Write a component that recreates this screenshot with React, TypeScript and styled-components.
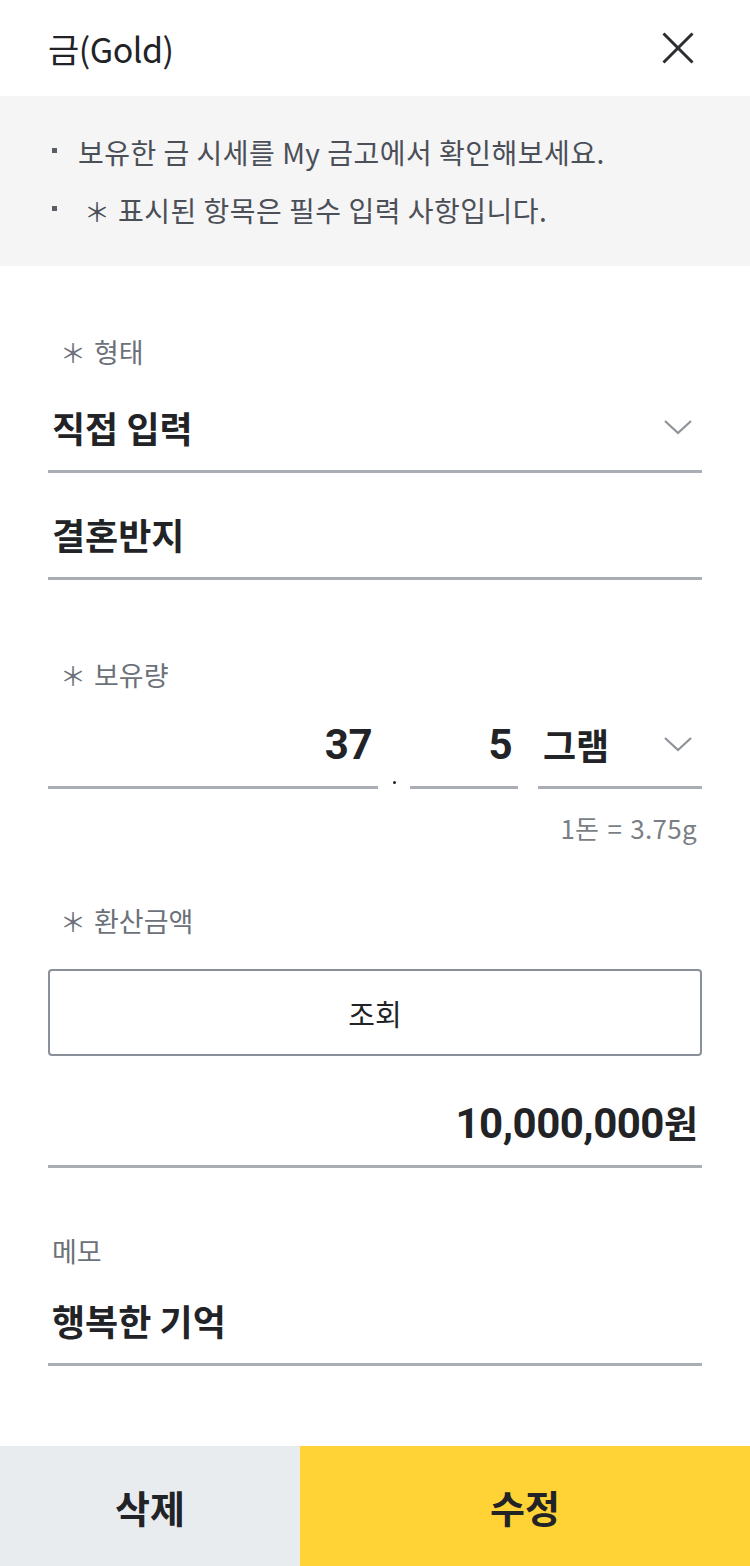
import styled, { createGlobalStyle } from 'styled-components';

const GlobalStyle = createGlobalStyle`
    * {
        box-sizing: border-box;
    }
    body {
        margin: 0;
        background: #ffffff;
        font-family: "Noto Sans CJK KR", "Noto Sans", sans-serif;
        color: #222327;
    }
`;

const Chevron = () => (
    <svg width="28" height="16" viewBox="0 0 28 16">
        <polyline points="1,2 14,14 27,2" fill="none" stroke="#8e939b" strokeWidth="2.2" />
    </svg>
);

const CloseIcon = () => (
    <svg width="32" height="32" viewBox="0 0 32 32">
        <line x1="1.5" y1="1.5" x2="30.5" y2="30.5" stroke="#2b2d31" strokeWidth="3" />
        <line x1="30.5" y1="1.5" x2="1.5" y2="30.5" stroke="#2b2d31" strokeWidth="3" />
    </svg>
);

export default function App() {
    return (
        <>
            <GlobalStyle />
            <Page>
                <Header>
                    <Title>금(Gold)</Title>
                    <CloseButton aria-label="닫기">
                        <CloseIcon />
                    </CloseButton>
                </Header>
                <Notice>
                    <NoticeItem>
                        <NoticeText>보유한 금 시세를 My 금고에서 확인해보세요.</NoticeText>
                    </NoticeItem>
                    <NoticeItem>
                        <NoticeText>
                            <Star $inline>＊</Star>표시된 항목은 필수 입력 사항입니다.
                        </NoticeText>
                    </NoticeItem>
                </Notice>

                <Form>
                    <Section $top={66}>
                        <Label>
                            <Star>＊</Star>형태
                        </Label>
                        <Field $gap={22}>
                            <Value>직접 입력</Value>
                            <Chevron />
                        </Field>
                        <Field $gap={28}>
                            <Value>결혼반지</Value>
                        </Field>
                    </Section>

                    <Section $top={75}>
                        <Label>
                            <Star>＊</Star>보유량
                        </Label>
                        <QtyRow>
                            <QtyField $width={330}>
                                <Digits>37</Digits>
                            </QtyField>
                            <Dot />
                            <QtyField $width={108}>
                                <Digits>5</Digits>
                            </QtyField>
                            <UnitField>
                                <Value>그램</Value>
                                <Chevron />
                            </UnitField>
                        </QtyRow>
                        <Hint>1돈 = 3.75g</Hint>
                    </Section>

                    <Section $top={58}>
                        <Label>
                            <Star>＊</Star>환산금액
                        </Label>
                        <LookupButton>조회</LookupButton>
                        <Field $gap={33} $align="flex-end">
                            <Amount>
                                <Digits>10,000,000</Digits>원
                            </Amount>
                        </Field>
                    </Section>

                    <Section $top={63}>
                        <Label>메모</Label>
                        <Field $gap={16}>
                            <Value>행복한 기억</Value>
                        </Field>
                    </Section>
                </Form>

                <Footer>
                    <FooterButton $primary={false}>삭제</FooterButton>
                    <FooterButton $primary>수정</FooterButton>
                </Footer>
            </Page>
        </>
    );
}

const Page = styled.div`
    width: 750px;
    min-height: 1566px;
    display: flex;
    flex-direction: column;
    background: #ffffff;
`;

const Header = styled.header`
    height: 96px;
    padding: 0 56px 0 48px;
    display: flex;
    justify-content: space-between;
    align-items: center;
`;

const Title = styled.h1`
    margin: 0;
    font-size: 34px;
    font-weight: 400;
    color: #222327;
    letter-spacing: -0.5px;
`;

const CloseButton = styled.button`
    width: 32px;
    height: 32px;
    padding: 0;
    border: none;
    background: none;
    display: flex;
    cursor: pointer;
`;

const Notice = styled.ul`
    margin: 0;
    padding: 27px 0 27px 52px;
    list-style: none;
    background: #f5f5f6;
`;

const NoticeItem = styled.li`
    display: flex;
    align-items: center;
    gap: 21px;
    height: 58px;

    &::before {
        content: '';
        flex: none;
        width: 5px;
        height: 5px;
        background: #5a5e66;
        margin-top: -4px;
    }
`;

const NoticeText = styled.span`
    font-size: 28px;
    color: #4b4f57;
    letter-spacing: 0.5px;
    white-space: nowrap;
`;

const Star = styled.span<{ $inline?: boolean }>`
    display: inline-block;
    width: 18px;
    margin-left: ${p => (p.$inline ? '10px' : '12px')};
    margin-right: 12px;
    text-align: center;
    text-indent: -4px;
    font-size: 26px;
    letter-spacing: 0;
    white-space: nowrap;
`;

const Form = styled.main`
    padding: 0 48px;
    display: flex;
    flex-direction: column;
`;

const Section = styled.section<{ $top: number }>`
    margin-top: ${p => p.$top}px;
    display: flex;
    flex-direction: column;
`;

const Label = styled.div`
    height: 40px;
    line-height: 40px;
    padding-left: 4px;
    font-size: 27px;
    color: #6c717a;
    display: flex;
    align-items: center;
`;

const Field = styled.div<{ $gap: number; $align?: string }>`
    margin-top: ${p => p.$gap}px;
    height: 79px;
    padding: 0 10px 11px 4px;
    display: flex;
    align-items: center;
    justify-content: ${p => p.$align || 'space-between'};
    border-bottom: 3px solid #a9aeb5;
`;

const Value = styled.span`
    font-size: 36px;
    font-weight: 700;
    color: #222327;
`;

const Digits = styled.span`
    font-family: Roboto, "Noto Sans CJK KR", sans-serif;
    font-size: 42px;
    font-weight: 700;
    letter-spacing: -0.5px;
`;

const QtyRow = styled.div`
    margin-top: 15px;
    display: flex;
    align-items: flex-end;
`;

const QtyField = styled.div<{ $width: number }>`
    width: ${p => p.$width}px;
    height: 79px;
    padding: 0 6px 8px 0;
    display: flex;
    align-items: center;
    justify-content: flex-end;
    border-bottom: 3px solid #a9aeb5;
    color: #222327;
`;

const Dot = styled.span`
    width: 3px;
    height: 3px;
    margin: 0 14px 5px 15px;
    border-radius: 50%;
    background: #222327;
`;

const UnitField = styled.div`
    flex: 1;
    margin-left: 20px;
    height: 79px;
    padding: 0 10px 8px 5px;
    display: flex;
    align-items: center;
    justify-content: space-between;
    border-bottom: 3px solid #a9aeb5;
`;

const Hint = styled.div`
    margin-top: 24px;
    align-self: flex-end;
    padding-right: 5px;
    font-size: 26px;
    line-height: 30px;
    color: #7a7f87;
    letter-spacing: 0.3px;
    word-spacing: 2px;
`;

const LookupButton = styled.button`
    margin-top: 28px;
    height: 87px;
    border: 2px solid #8a9099;
    border-radius: 4px;
    background: #ffffff;
    font-family: inherit;
    font-size: 29px;
    color: #222327;
    cursor: pointer;
`;

const Amount = styled.span`
    font-size: 37px;
    font-weight: 700;
    color: #222327;
    margin-right: -6px;
`;

const Footer = styled.footer`
    margin-top: auto;
    height: 120px;
    display: flex;
`;

const FooterButton = styled.button<{ $primary: boolean }>`
    flex: ${p => (p.$primary ? '0 0 450px' : '0 0 300px')};
    border: none;
    background: ${p => (p.$primary ? '#ffd236' : '#e9ecef')};
    font-family: inherit;
    font-size: 38px;
    font-weight: 700;
    color: #222327;
    cursor: pointer;
`;
